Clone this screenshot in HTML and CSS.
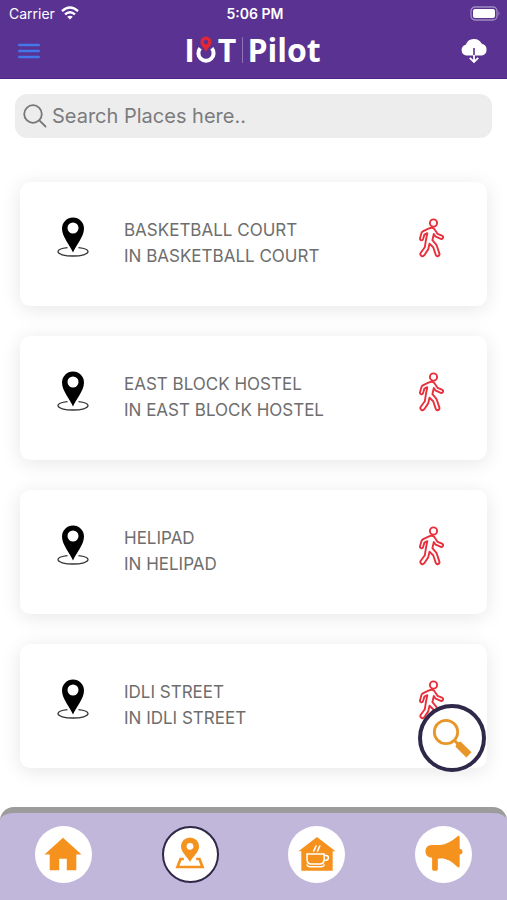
FILE: index.html
```html
<!DOCTYPE html>
<html lang="en">
<head>
    <meta charset="UTF-8">
    <meta name="viewport" content="width=device-width, initial-scale=1.0">
    <title>IoT Pilot - Places</title>
    <link rel="stylesheet" href="styles.css">
</head>
<body>
    <svg class="sprite" aria-hidden="true">
        <symbol id="pin" viewBox="0 0 34 42">
            <path d="M11.5 31.6C5.500 32.200 2 33.600 2 35.600C2 38.200 8.500 40 17 40S32 38.200 32 35.600C32 33.600 28.500 32.200 22.500 31.600" fill="none" stroke="#333" stroke-width="1.300"/>
            <path fill-rule="evenodd" d="M17 36.500C14.500 30 6 21 6 12.500A11 11 0 0 1 28 12.500C28 21 19.500 30 17 36.500ZM17 6.500a5.500 5.500 0 1 0 0 11a5.500 5.500 0 0 0 0-11Z"/>
        </symbol>
        <symbol id="walk" viewBox="0 0 26 40">
            <g fill="none" stroke="#e8303c" stroke-width="1.900" stroke-linejoin="round" stroke-linecap="round">
                <circle cx="15.500" cy="5" r="3.600"/>
                <path d="M11 10.300L4.800 13.400Q3.800 14 3.500 15L2 20.200C1.600 22.500 4.500 23 5 21.200L6.400 16.600L9.300 15.200L7.800 22.800L6.800 29.300L2.600 35C1.500 37.500 4.600 39.400 6.300 37.200L10.200 31.400L11.500 25.800L15.200 29.300L17.800 36.900C18.800 39.200 22 38 21.400 35.600L18.800 27.800Q18.500 27 18 26.400L14.400 22.200L15.800 16L17.300 18.300L22.800 20.800C25 21.500 26 18.600 24 17.700L19.500 15.800L16.700 11.500C15.600 9.500 13.500 9.400 11 10.300Z"/>
            </g>
        </symbol>
    </svg>

    <header class="header">
        <div class="status">
            <span class="carrier">Carrier
                <svg width="18" height="14" viewBox="0 0 18 14">
                    <g fill="none" stroke="#fff" stroke-width="2.400">
                        <path d="M1 5.200Q9-2 17 5.200"/>
                        <path d="M4 8.400Q9 4 14 8.400"/>
                    </g>
                    <path d="M9 13.600L6.200 10.800Q9 8.600 11.800 10.800Z" fill="#fff"/>
                </svg>
            </span>
            <span class="time">5:06 PM</span>
            <svg class="battery" width="31" height="15" viewBox="0 0 31 15">
                <rect x="1" y="1" width="26" height="13" rx="4" fill="none" stroke="#a08cc2" stroke-width="1.300"/>
                <rect x="3" y="3" width="22" height="9" rx="2" fill="#fff"/>
                <path d="M28.500 5.300Q30.500 7.500 28.500 9.700Z" fill="#a08cc2"/>
            </svg>
        </div>
        <div class="navbar">
            <button class="icon-btn" aria-label="Menu">
                <svg width="22" height="16" viewBox="0 0 22 16">
                    <path d="M1.300 2H20.700M1.300 8H20.700M1.300 14H20.700" stroke="#4377ec" stroke-width="2.600" stroke-linecap="round"/>
                </svg>
            </button>
            <div class="logo">
                <span>I</span>
                <svg width="22" height="28" viewBox="0 0 22 28">
                    <path d="M5.200 12.200A7.600 7.600 0 1 0 16.800 12.200" fill="none" stroke="#fff" stroke-width="4"/>
                    <path fill-rule="evenodd" d="M11 16C10 12.500 5.500 10 5.500 6A5.500 5.500 0 0 1 16.500 6C16.500 10 12 12.500 11 16ZM11 3.800a2.200 2.200 0 1 0 0 4.400a2.200 2.200 0 0 0 0-4.400Z" fill="#e32636"/>
                </svg>
                <span>T</span>
                <span class="divider"></span>
                <span>Pilot</span>
            </div>
            <button class="icon-btn" aria-label="Download">
                <svg width="28" height="26" viewBox="0 0 28 26">
                    <path d="M6 17.500A5.500 5.500 0 0 1 5.700 6.800A8.800 8.800 0 0 1 21.800 5.800A6 6 0 0 1 22 17.500Z" fill="#fff"/>
                    <path d="M14 10V18" stroke="#5a3291" stroke-width="1.600"/>
                    <path d="M14 17V24M9.800 19.800L14 24L18.200 19.800" fill="none" stroke="#fff" stroke-width="1.800"/>
                </svg>
            </button>
        </div>
    </header>

    <div class="content">
        <main class="scroll">
            <label class="search">
                <svg width="24" height="24" viewBox="0 0 24 24" fill="none" stroke="#77777b" stroke-width="1.800" stroke-linecap="round">
                    <circle cx="10" cy="10" r="8.800"/>
                    <path d="M16.400 16.400L22.500 22.500"/>
                </svg>
                <input type="text" placeholder="Search Places here.." aria-label="Search places">
            </label>

            <ul class="places">
                <li class="card">
                    <svg class="pin"><use href="#pin"/></svg>
                    <div class="info">
                        <div>BASKETBALL COURT</div>
                        <div>IN BASKETBALL COURT</div>
                    </div>
                    <button class="walk" aria-label="Walk to Basketball Court"><svg><use href="#walk"/></svg></button>
                </li>
                <li class="card">
                    <svg class="pin"><use href="#pin"/></svg>
                    <div class="info">
                        <div>EAST BLOCK HOSTEL</div>
                        <div>IN EAST BLOCK HOSTEL</div>
                    </div>
                    <button class="walk" aria-label="Walk to East Block Hostel"><svg><use href="#walk"/></svg></button>
                </li>
                <li class="card">
                    <svg class="pin"><use href="#pin"/></svg>
                    <div class="info">
                        <div>HELIPAD</div>
                        <div>IN HELIPAD</div>
                    </div>
                    <button class="walk" aria-label="Walk to Helipad"><svg><use href="#walk"/></svg></button>
                </li>
                <li class="card">
                    <svg class="pin"><use href="#pin"/></svg>
                    <div class="info">
                        <div>IDLI STREET</div>
                        <div>IN IDLI STREET</div>
                    </div>
                    <button class="walk" aria-label="Walk to Idli Street"><svg><use href="#walk"/></svg></button>
                </li>
            </ul>
        </main>
        <button class="fab" aria-label="Search">
            <svg width="40" height="40" viewBox="0 0 40 40">
                <circle cx="14" cy="14" r="11.700" fill="none" stroke="#e8962a" stroke-width="2.800"/>
                <path d="M22.500 22.500L26 26" stroke="#e8962a" stroke-width="3"/>
                <path d="M28.500 23.500L39.500 34.300L34.300 39.500L23.500 28.700L24.500 25Z" fill="#e8962a"/>
            </svg>
        </button>
    </div>

    <nav class="tabbar">
        <a href="#home" aria-label="Home">
            <span class="circle">
                <svg viewBox="0 0 40 40" fill="#f5921e">
                    <path d="M20 3L39.500 20.500H34V37H24V25H16V37H6V20.500H.5Z"/>
                </svg>
            </span>
        </a>
        <a href="#places" class="active" aria-label="Places">
            <span class="circle">
                <svg viewBox="0 0 40 40" fill="#f5921e">
                    <path fill-rule="evenodd" d="M20 28.500C17 22.500 10.500 18 10.500 12A9.500 9.500 0 0 1 29.500 12C29.500 18 23 22.500 20 28.500ZM20 8.300a3.600 3.600 0 1 0 0 7.200a3.600 3.600 0 0 0 0-7.200Z"/>
                    <path d="M13.500 25.300H10L6.800 33.700H33.200L30 25.300H26.500" fill="none" stroke="#f5921e" stroke-width="2.800"/>
                </svg>
            </span>
        </a>
        <a href="#cafe" aria-label="Cafe">
            <span class="circle">
                <svg viewBox="0 0 40 40" fill="#f5921e">
                    <path d="M20 2L39.500 17H36.500V37.500H3.500V17H.5Z"/>
                    <g fill="none" stroke="#fff" stroke-width="1.600" stroke-linecap="round">
                        <path d="M9.500 20H27.500V25.500Q27.500 30.500 23 30.500H14Q9.500 30.500 9.500 25.500ZM27.500 21.500H29.500Q32 21.500 32 24T29.500 26.500H27.500M9.500 31.500Q10 33.500 13 33.500H24Q27 33.500 27.500 31.500M16.500 17L19 11.500M20.500 17L23 11.500"/>
                    </g>
                </svg>
            </span>
        </a>
        <a href="#news" aria-label="Announcements">
            <span class="circle">
                <svg viewBox="0 0 40 40" fill="#f5921e">
                    <path d="M7 10.500H16Q25 9.500 34 1.500Q35 .2 36.500 1.500V14.500Q39.500 15 39.500 17.500T36.500 20.500V33.500Q35 34.800 34 33.500Q26 25.500 18 24.500L13.500 25V36Q13.500 37.500 12 37.500H9Q7.500 37.500 7.500 36V24Q.5 23 .5 17.500Q.5 10.500 7 10.500Z"/>
                </svg>
            </span>
        </a>
    </nav>
</body>
</html>
```
FILE: styles.css
```css
* {
    box-sizing: border-box;
}
body {
    margin: 0;
    height: 100vh;
    display: flex;
    flex-direction: column;
    background-color: #fff;
    color: #6e6e6e;
    font-family: Inter, "Liberation Sans", sans-serif;
}
button {
    padding: 0;
    border: none;
    background: none;
    cursor: pointer;
}
svg {
    display: block;
}
.sprite {
    display: none;
}

/* header */
.header {
    background-color: #5a3291;
    color: #fff;
    border-bottom: 1px solid #4d2488;
}
.status {
    display: grid;
    grid-template-columns: 1fr auto 1fr;
    align-items: center;
    height: 26px;
    padding: 0 6px 0 9px;
    font-size: 14px;
}
.carrier {
    display: flex;
    align-items: center;
    gap: 6px;
}
.time {
    font-weight: 600;
}
.battery {
    justify-self: end;
}
.navbar {
    display: flex;
    justify-content: space-between;
    align-items: center;
    height: 52px;
    padding: 0 19px 2px 18px;
}
.logo {
    display: flex;
    align-items: center;
    padding-left: 5px;
    font-family: "Open Sans", "Noto Sans", sans-serif;
    font-size: 32px;
    line-height: 44px;
    font-weight: 700;
}
.logo svg {
    margin: 0 1px 2px 0;
}
.logo span {
    margin-bottom: 2px;
}
.logo .divider {
    width: 1px;
    height: 26px;
    margin: 0 4px 2px 6px;
    background-color: #8f74b6;
}

/* content */
.content {
    position: relative;
    flex: 1;
    min-height: 0;
}
.scroll {
    height: 100%;
    overflow-y: auto;
    scrollbar-width: none;
}
.search {
    display: flex;
    align-items: center;
    gap: 5px;
    height: 44px;
    margin: 15px 15px 0;
    padding: 0 8px;
    border-radius: 12px;
    background-color: #ededed;
}
.search input {
    flex: 1;
    min-width: 0;
    padding: 0;
    border: none;
    outline: none;
    background: none;
    color: #444;
    font-family: inherit;
    font-size: 20px;
}
.search input::placeholder {
    color: #7b7b7d;
}
.places {
    display: flex;
    flex-direction: column;
    gap: 30px;
    margin: 0;
    padding: 44px 20px 26px;
    list-style: none;
}
.card {
    display: flex;
    align-items: center;
    height: 124px;
    padding: 0 43px 0 36px;
    border-radius: 10px;
    background-color: #fff;
    box-shadow: 0 3px 20px rgba(0, 0, 0, 0.1);
}
.pin {
    width: 34px;
    height: 42px;
    margin-bottom: 14px;
}
.info {
    flex: 1;
    padding: 0 0 2px 34px;
    font-size: 17px;
    line-height: 26px;
}
.walk {
    margin-bottom: 12px;
}
.walk svg {
    width: 26px;
    height: 40px;
}
.fab {
    position: absolute;
    right: 21px;
    bottom: 35px;
    display: flex;
    justify-content: center;
    align-items: center;
    width: 68px;
    height: 68px;
    border: 4px solid #2f2849;
    border-radius: 50%;
    background-color: #fff;
}

/* bottom tabs */
.tabbar {
    display: flex;
    height: 93px;
    border-top: 6px solid #9c9c9c;
    border-radius: 14px 14px 0 0;
    background-color: #c1b7da;
}
.tabbar a {
    flex: 1;
    display: flex;
    justify-content: center;
    align-items: center;
    padding-bottom: 5px;
}
.circle {
    display: flex;
    justify-content: center;
    align-items: center;
    width: 57px;
    height: 57px;
    border-radius: 50%;
    background-color: #fff;
}
.circle svg {
    width: 38px;
    height: 38px;
}
.active .circle {
    border: 2px solid #2f2849;
}
```
